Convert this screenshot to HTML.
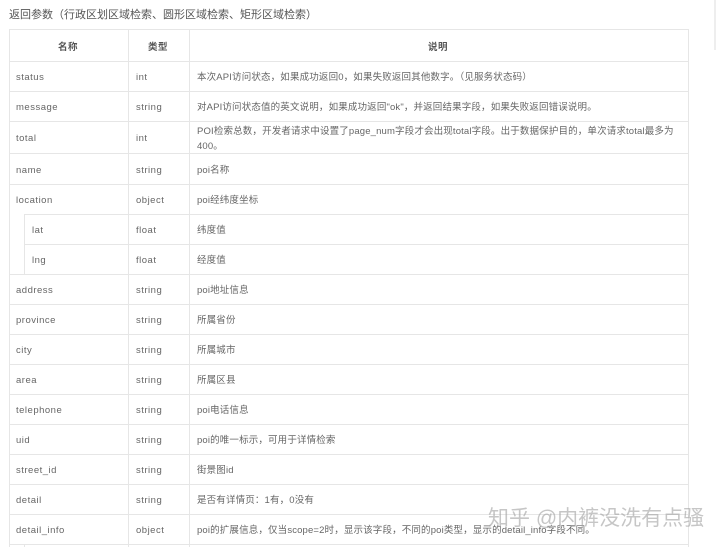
<!DOCTYPE html>
<html><head><meta charset="utf-8"><style>
*{margin:0;padding:0;box-sizing:border-box}
body{width:720px;height:547px;background:#fff;position:relative;overflow:hidden;font-family:"Liberation Sans","Noto Sans CJK SC",sans-serif;color:#666;font-size:9.5px}
.t{position:absolute;left:9px;top:6px;font-size:11px;color:#555;letter-spacing:0}
.h{position:absolute;left:9px;width:680px;height:1px;background:#e6e6e6}
.v{position:absolute;width:1px;background:#e6e6e6}
.c{position:absolute;white-space:nowrap;letter-spacing:0.5px;line-height:14px;margin-top:2px}
.d{letter-spacing:0.15px}
.hd{color:#555;font-weight:bold}
.wm{position:absolute;left:488px;top:502px;font-size:21px;color:rgba(160,160,160,0.6);letter-spacing:0;font-family:"Liberation Sans","Noto Sans CJK SC",sans-serif}
</style></head><body>
<div class="t">返回参数（行政区划区域检索、圆形区域检索、矩形区域检索）</div>
<div style="position:absolute;left:714px;top:0;width:2px;height:50px;background:#eee"></div>
<div class="h" style="top:29px"></div>
<div class="h" style="top:61px"></div>
<div class="h" style="top:91px"></div>
<div class="h" style="top:121px"></div>
<div class="h" style="top:153px"></div>
<div class="h" style="top:184px"></div>
<div class="h" style="top:214px;left:24px;width:665px"></div>
<div class="h" style="top:244px;left:24px;width:665px"></div>
<div class="h" style="top:274px"></div>
<div class="h" style="top:304px"></div>
<div class="h" style="top:334px"></div>
<div class="h" style="top:364px"></div>
<div class="h" style="top:394px"></div>
<div class="h" style="top:424px"></div>
<div class="h" style="top:454px"></div>
<div class="h" style="top:484px"></div>
<div class="h" style="top:514px"></div>
<div class="h" style="top:544px"></div>
<div class="v" style="left:9px;top:29px;height:518px"></div>
<div class="v" style="left:128px;top:29px;height:518px"></div>
<div class="v" style="left:189px;top:29px;height:518px"></div>
<div class="v" style="left:688px;top:29px;height:518px"></div>
<div class="v" style="left:24px;top:214px;height:60px"></div>
<div class="v" style="left:24px;top:544px;height:3px"></div>

<div class="c hd" style="left:58px;top:39px">名称</div>
<div class="c hd" style="left:148px;top:39px">类型</div>
<div class="c hd" style="left:428px;top:39px">说明</div>

<div class="c" style="left:16px;top:69px">status</div><div class="c" style="left:136px;top:69px">int</div><div class="c d" style="left:197px;top:69px">本次API访问状态，如果成功返回0，如果失败返回其他数字。（见服务状态码）</div>
<div class="c" style="left:16px;top:99px">message</div><div class="c" style="left:136px;top:99px">string</div><div class="c d" style="left:197px;top:99px">对API访问状态值的英文说明，如果成功返回"ok"，并返回结果字段，如果失败返回错误说明。</div>
<div class="c" style="left:16px;top:130px">total</div><div class="c" style="left:136px;top:130px">int</div><div class="c d" style="left:197px;top:122px;line-height:15px">POI检索总数，开发者请求中设置了page_num字段才会出现total字段。出于数据保护目的，单次请求total最多为<br>400。</div>
<div class="c" style="left:16px;top:162px">name</div><div class="c" style="left:136px;top:162px">string</div><div class="c d" style="left:197px;top:162px">poi名称</div>
<div class="c" style="left:16px;top:192px">location</div><div class="c" style="left:136px;top:192px">object</div><div class="c d" style="left:197px;top:192px">poi经纬度坐标</div>
<div class="c" style="left:32px;top:222px">lat</div><div class="c" style="left:136px;top:222px">float</div><div class="c d" style="left:197px;top:222px">纬度值</div>
<div class="c" style="left:32px;top:252px">lng</div><div class="c" style="left:136px;top:252px">float</div><div class="c d" style="left:197px;top:252px">经度值</div>
<div class="c" style="left:16px;top:282px">address</div><div class="c" style="left:136px;top:282px">string</div><div class="c d" style="left:197px;top:282px">poi地址信息</div>
<div class="c" style="left:16px;top:312px">province</div><div class="c" style="left:136px;top:312px">string</div><div class="c d" style="left:197px;top:312px">所属省份</div>
<div class="c" style="left:16px;top:342px">city</div><div class="c" style="left:136px;top:342px">string</div><div class="c d" style="left:197px;top:342px">所属城市</div>
<div class="c" style="left:16px;top:372px">area</div><div class="c" style="left:136px;top:372px">string</div><div class="c d" style="left:197px;top:372px">所属区县</div>
<div class="c" style="left:16px;top:402px">telephone</div><div class="c" style="left:136px;top:402px">string</div><div class="c d" style="left:197px;top:402px">poi电话信息</div>
<div class="c" style="left:16px;top:432px">uid</div><div class="c" style="left:136px;top:432px">string</div><div class="c d" style="left:197px;top:432px">poi的唯一标示，可用于详情检索</div>
<div class="c" style="left:16px;top:462px">street_id</div><div class="c" style="left:136px;top:462px">string</div><div class="c d" style="left:197px;top:462px">街景图id</div>
<div class="c" style="left:16px;top:492px">detail</div><div class="c" style="left:136px;top:492px">string</div><div class="c d" style="left:197px;top:492px">是否有详情页：1有，0没有</div>
<div class="c" style="left:16px;top:522px">detail_info</div><div class="c" style="left:136px;top:522px">object</div><div class="c d" style="left:197px;top:522px">poi的扩展信息，仅当scope=2时，显示该字段，不同的poi类型，显示的detail_info字段不同。</div>

<div class="wm">知乎 @内裤没洗有点骚</div>
</body></html>
